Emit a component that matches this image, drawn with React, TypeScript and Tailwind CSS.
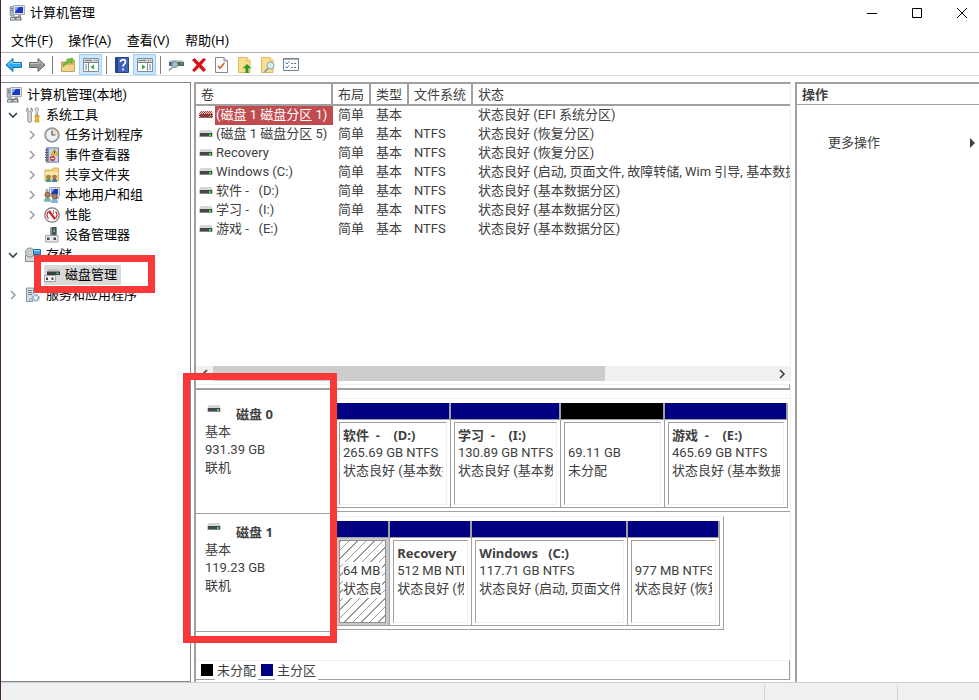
import clsx from "clsx";
import type { ReactNode } from "react";

type TreeItem = {
  label: string;
  level: 0 | 1 | 2;
  icon: ReactNode;
  state?: "open" | "closed";
  selected?: boolean;
};

type Volume = {
  name: string;
  fs: string;
  status: string;
};

type Partition = {
  name: string;
  size: string;
  status: string;
  weight: number;
  unallocated?: boolean;
  selected?: boolean;
};

function ComputerIcon() {
  return (
    <svg width="16" height="16" viewBox="0 0 16 16" aria-hidden="true">
      <path d="M1 1.500h4.500v9H1z" fill="#aeb6bd" stroke="#7b858d" strokeWidth=".6" />
      <path d="M2 3.500h2M2 5.500h2" stroke="#5b656d" strokeWidth=".8" />
      <path d="M4.500 .500h11v9h-11z" fill="#dfe4e8" stroke="#a3abb2" />
      <path d="M6 2h8v6H6z" fill="#1c38c4" />
      <path d="M6 7V2h4z" fill="#7ea3f4" />
      <path d="M9 10h3v2H9z" fill="#a5adb3" />
      <path d="M2 11.500h9.500l1 1.500v2.500H1V13z" fill="#6f797f" />
      <path d="M2 13h3.500v1.500H2zM7.500 13H11v1.500H7.500z" fill="#dde2e5" />
    </svg>
  );
}

function ToolsIcon() {
  return (
    <svg width="16" height="16" viewBox="0 0 16 16" aria-hidden="true">
      <path d="M3 .800v3l1.500 1 1.500-1v-3c1.800 1 2.200 3.600.400 5V14c0 2-3.500 2-3.500 0V5.800C.800 4.400 1.200 1.800 3 .800z" fill="#d5d8da" stroke="#777d81" strokeWidth=".8" />
      <path d="M10.500 1h2.500l.6 2-1 1.500V9h-1.500V4.500l-1-1.500z" fill="#eceef0" stroke="#777" strokeWidth=".7" />
      <path d="M10 8.500h4v2l-.6 1 .6 3.500h-4l.6-3.500-.6-1z" fill="#f2b51d" stroke="#bd8208" strokeWidth=".6" />
    </svg>
  );
}

function ClockIcon() {
  return (
    <svg width="16" height="16" viewBox="0 0 16 16" aria-hidden="true">
      <circle cx="8" cy="8" r="7.300" fill="#a9adb0" stroke="#73787c" strokeWidth=".7" />
      <circle cx="8" cy="8" r="5.700" fill="#eef3f8" />
      <path d="M8 8V2.500A5.500 5.500 0 0 1 13.500 8z" fill="#f5dfad" />
      <path d="M8 3.500V8h3.500" fill="none" stroke="#45608a" strokeWidth="1.200" />
    </svg>
  );
}

function EventIcon() {
  return (
    <svg width="16" height="16" viewBox="0 0 16 16" aria-hidden="true">
      <path d="M2.500 .800h12v14.400h-12z" fill="#c3d2ea" stroke="#6e83a8" />
      <path d="M3 1h2v14H3z" fill="#7f95bb" />
      <path d="M1 3h3M1 5.500h3M1 8h3M1 10.500h3M1 13h3" stroke="#555" />
      <path d="M10.500 2l3.500 6H7z" fill="#f9cb2d" stroke="#b8860b" strokeWidth=".6" />
      <path d="M10.500 4v2.500" stroke="#222" />
      <circle cx="8.500" cy="11.500" r="2.700" fill="#d84141" />
      <path d="M7 11.500h3" stroke="#fff" />
    </svg>
  );
}

function UsersFigure({ x, y, body }: { x: number; y: number; body: string }) {
  return (
    <g transform={`translate(${x} ${y})`}>
      <path d="M0 7c0-3 1.500-3.500 2.500-3.500S5 4 5 7z" fill={body} />
      <circle cx="2.500" cy="2" r="1.800" fill="#b98055" stroke="#604025" strokeWidth=".5" />
    </g>
  );
}

function SharedFolderIcon() {
  return (
    <svg width="16" height="16" viewBox="0 0 16 16" aria-hidden="true">
      <path d="M1 3h7l1-2h5.500v13H1z" fill="#f2d27a" stroke="#cfa645" strokeWidth=".8" />
      <path d="M1.500 5h12.500v3H1.500z" fill="#fae9b4" />
      <UsersFigure x={2} y={8} body="#3c9a87" />
      <UsersFigure x={8} y={8} body="#3a79b7" />
    </svg>
  );
}

function LocalUsersIcon() {
  return (
    <svg width="16" height="16" viewBox="0 0 16 16" aria-hidden="true">
      <path d="M5.500 .500h10v8.500h-10z" fill="#dfe3e8" stroke="#a3abb2" />
      <path d="M7 2h7v5.500H7z" fill="#1837c5" />
      <path d="M7 7V2h3.500z" fill="#7ea3f4" />
      <path d="M1.500 2h3v7h-3z" fill="#a7b0b7" />
      <path d="M10 10h5v2h-5z" fill="#9ba4ab" />
      <g transform="translate(0 5) scale(1.400)">
        <UsersFigure x={0} y={0} body="#77b8a0" />
        <UsersFigure x={5} y={1} body="#8ab4dc" />
      </g>
    </svg>
  );
}

function PerformanceIcon() {
  return (
    <svg width="16" height="16" viewBox="0 0 16 16" aria-hidden="true">
      <circle cx="8" cy="8" r="7.200" fill="#fff" stroke="#73797e" strokeWidth="1.200" />
      <path d="M4.500 11.500a5 5 0 0 1 0-7M11.500 4.500a5 5 0 0 1 0 7" fill="none" stroke="#d83b3b" strokeWidth="1.600" />
      <path d="M5 4l6 8" stroke="#c32424" strokeWidth="2.200" />
      <path d="M9.500 3v4" stroke="#5c6266" strokeWidth=".8" />
    </svg>
  );
}

function DeviceIcon() {
  return (
    <svg width="16" height="16" viewBox="0 0 16 16" aria-hidden="true">
      <path d="M6 .500l2-.5h4.500v9H6z" fill="#8b9297" />
      <path d="M8 0h4.500v9H8z" fill="#4b5257" />
      <path d="M9.500 2.500H11V5H9.500z" fill="#44e067" />
      <path d="M1.500 8.500h12.500v6.500H1.500z" fill="#e7e9ea" stroke="#a0a5a8" />
      <path d="M3 10.500h2.500V13H3zM9.500 10.500H12V13H9.500z" fill="#454b50" />
    </svg>
  );
}

function StorageIcon() {
  return (
    <svg width="16" height="16" viewBox="0 0 16 16" aria-hidden="true">
      <path d="M.500 8.500h12v6H.500z" fill="#d5d9dc" stroke="#858c91" />
      <circle cx="5" cy="5.500" r="4.500" fill="#cdd2d5" stroke="#868d92" />
      <circle cx="5" cy="5.500" r="1.500" fill="#fff" stroke="#868d92" strokeWidth=".7" />
      <path d="M8.500 2.500h7v5h-7z" fill="#3fa6df" stroke="#1e6f9f" />
      <path d="M9 3.500h6" stroke="#a5def9" />
      <path d="M9 9.500h2" stroke="#3b3" />
    </svg>
  );
}

function DiskManagementIcon() {
  return (
    <svg width="16" height="16" viewBox="0 0 16 16" aria-hidden="true">
      <path d="M5 2h9l2 2.500H3z" fill="#bfc3c5" />
      <path d="M3 4.500h13V8H3z" fill="#373d41" />
      <path d="M12.500 5.500h2V7h-2z" fill="#3df35f" />
      <path d="M.500 8.500h11v6H.500z" fill="#f4f4f4" stroke="#a0a4a6" />
      <path d="M2 10.500h2V13H2zM7.500 10.500h2V13h-2z" fill="#42474b" />
    </svg>
  );
}

function ServicesIcon() {
  return (
    <svg width="16" height="16" viewBox="0 0 16 16" aria-hidden="true">
      <path d="M1.500 1h7v13.500h-7z" fill="#d9dde0" stroke="#8a9298" />
      <path d="M3 3.500h4M3 5.500h4M3 7.500h4" stroke="#727b82" />
      <path d="M8 7h7v8H8z" fill="#f4f7fa" />
      <circle cx="10.800" cy="10.800" r="2.800" fill="none" stroke="#7fa3c2" strokeWidth="2" strokeDasharray="1.500 .7" />
      <circle cx="6" cy="13" r="1.500" fill="none" stroke="#8ba5ba" />
    </svg>
  );
}

function DriveIcon({ hatched = false }: { hatched?: boolean }) {
  return (
    <svg width="14" height="7" viewBox="0 0 14 7" className="shrink-0" aria-hidden="true">
      <defs>
        <pattern id="drive-hatch" width="2" height="2" patternUnits="userSpaceOnUse">
          <path d="M0 0h1v1H0zM1 1h1v1H1z" fill="#c03030" />
        </pattern>
      </defs>
      <path d="M2 0h10l2 3H0z" fill="#d4d6d9" />
      <path d="M0 3h14v4H0z" fill="#c9cccf" />
      <path d="M1 3h12v3.500H1z" fill="#45484b" />
      <path d="M10 4h2v2h-2z" fill="#2bea3c" />
      {hatched ? <path d="M1 0h12l1 3v4H0V3z" fill="url(#drive-hatch)" /> : null}
    </svg>
  );
}

function ArrowIcon({ forward = false }: { forward?: boolean }) {
  return (
    <svg width="18" height="16" viewBox="0 0 18 16" className={forward ? "-scale-x-100" : ""} aria-hidden="true">
      <path
        d="M1 8l7-6.500v4h8.500v5H8v4z"
        fill={forward ? "#929496" : "#2fa9ea"}
        stroke={forward ? "#66696b" : "#1571ad"}
        strokeLinejoin="round"
      />
      <path d="M3 7.500L7 4v2.500h8.500" fill="none" stroke={forward ? "#c4c6c7" : "#8edbfb"} />
    </svg>
  );
}

function FolderUpIcon() {
  return (
    <svg width="16" height="16" viewBox="0 0 16 16" aria-hidden="true">
      <path d="M1.500 5h5l1-2h7v11.500h-13z" fill="#dfb65c" stroke="#b9944a" strokeWidth=".8" />
      <path d="M2 8h12v6H2z" fill="#f1d48c" />
      <path d="M2.500 10C3 6.500 5 4.500 7.500 4.200V6L12 2.800 8 .300v1.500" fill="none" />
      <path d="M3 10c.5-4 2.500-5.500 5-5.800L6.500 2.500 12.500 1 12 6.500l-1.700-1.200C8.500 6 6 6.500 3 10z" fill="#6cc644" stroke="#4a9b2a" strokeWidth=".6" />
    </svg>
  );
}

function PaneIcon({ forward = false }: { forward?: boolean }) {
  return (
    <svg width="16" height="14" viewBox="0 0 16 14" aria-hidden="true">
      <path d="M.500 .500h15v13H.500z" fill="#fff" stroke="#858c92" />
      <path d="M1 1h14v3H1z" fill="#d5d9dc" />
      <path d="M2 2.500h7M11 2.500h1M13 2.500h1M1 4.500h14" stroke="#757d84" />
      {forward ? (
        <>
          <path d="M10.500 5v8.500" stroke="#858c92" />
          <path d="M12 7h2M12 9h2M12 11h2" stroke="#4c86b6" />
          <path d="M5 6.500v5L8.500 9z" fill="#35a937" />
        </>
      ) : (
        <>
          <path d="M5.500 5v8.500" stroke="#858c92" />
          <path d="M2 7h2M2 9h2M2 11h2" stroke="#4c86b6" />
          <path d="M11 6.500v5L7.500 9z" fill="#35a937" />
        </>
      )}
    </svg>
  );
}

function HelpIcon() {
  return (
    <svg width="14" height="16" viewBox="0 0 14 16" aria-hidden="true">
      <path d="M.500 .500h13v15H.500z" fill="#3f63bd" stroke="#2a438b" />
      <path d="M1 1h2v14H1z" fill="#2a438b" />
      <path d="M5.500 5c0-3.200 5-3 5 0 0 2-2.500 2.200-2.500 4.500M8 11.500v2" fill="none" stroke="#fff" strokeWidth="1.700" />
    </svg>
  );
}

function ScanDriveIcon() {
  return (
    <svg width="16" height="14" viewBox="0 0 16 14" aria-hidden="true">
      <path d="M2 2h12l2 2H1z" fill="#c3c8cc" />
      <path d="M1 4h15v4H1z" fill="#5a6167" />
      <path d="M13 5h1.500v1.500H13z" fill="#39e452" />
      <path d="M4.500 9L1 12.500" stroke="#8b9298" strokeWidth="1.600" />
      <circle cx="6.800" cy="6.500" r="3" fill="#9cc3da" stroke="#7a8992" />
    </svg>
  );
}

function DeleteIcon() {
  return (
    <svg width="14" height="14" viewBox="0 0 14 14" aria-hidden="true">
      <path d="M0 2l2.500-2 4.500 4.500L11.500 0 14 1.500 9.500 6.800l4.500 5-2.500 2.200L7 9.300 2.500 14 0 12.200 4.700 7z" fill="#d40f16" />
    </svg>
  );
}

function CheckPageIcon() {
  return (
    <svg width="13" height="16" viewBox="0 0 13 16" aria-hidden="true">
      <path d="M.500 .500h8.500l3.500 3.500v11.500H.500z" fill="#fbfbfb" stroke="#858789" />
      <path d="M9 .500V4h3.500" fill="#ddd" stroke="#858789" />
      <path d="M3 9l2 2 4.500-5" fill="none" stroke="#df5721" strokeWidth="1.600" />
    </svg>
  );
}

function NoteIcon({ search = false }: { search?: boolean }) {
  return (
    <svg width="15" height="16" viewBox="0 0 15 16" aria-hidden="true">
      <path d="M1.500 .500h8.500l3 3v12H1.500z" fill="#fbdf8c" stroke="#dfb95c" />
      <path d="M10 .500V4h3" fill="#fff0b8" stroke="#dfb95c" />
      {search ? (
        <>
          <circle cx="10.500" cy="8.500" r="3.500" fill="#d6edf8" stroke="#8ba4b2" />
          <path d="M8 11.500L4 15.500" stroke="#8ba4b2" strokeWidth="1.800" />
        </>
      ) : (
        <path d="M10 7l4.500 4.300H11.500V16h-3v-4.700H5.500z" fill="#279b2c" />
      )}
    </svg>
  );
}

function ChecklistIcon() {
  return (
    <svg width="16" height="13" viewBox="0 0 16 13" aria-hidden="true">
      <path d="M.500 .500h15v12H.500z" fill="#fff" stroke="#77818a" />
      <path d="M1 1.500h14" stroke="#aeb4b9" />
      <path d="M2.500 4.500L4 6l2-2.500M2.500 8.500L4 10l2-2.500" fill="none" stroke="#2c7fc1" />
      <path d="M8 5.500h2M11 5.500h2M8 9.500h2M11 9.500h2" stroke="#777" />
    </svg>
  );
}

function Chevron({ className }: { className?: string }) {
  return (
    <svg width="10" height="10" viewBox="0 0 10 10" className={className} aria-hidden="true">
      <path d="M3 1l4 4-4 4" fill="none" stroke="currentColor" strokeWidth="1.600" />
    </svg>
  );
}

const MENUS = ["文件(F)", "操作(A)", "查看(V)", "帮助(H)"];

const TOOLBAR: { label: string; icon: ReactNode; active?: boolean; divider?: boolean }[] = [
  { label: "后退", icon: <ArrowIcon /> },
  { label: "前进", icon: <ArrowIcon forward />, divider: true },
  { label: "上一级", icon: <FolderUpIcon /> },
  { label: "显示/隐藏控制台树", icon: <PaneIcon />, active: true, divider: true },
  { label: "帮助", icon: <HelpIcon /> },
  { label: "显示/隐藏操作窗格", icon: <PaneIcon forward />, active: true, divider: true },
  { label: "重新扫描磁盘", icon: <ScanDriveIcon /> },
  { label: "删除", icon: <DeleteIcon /> },
  { label: "属性", icon: <CheckPageIcon /> },
  { label: "打开", icon: <NoteIcon /> },
  { label: "浏览", icon: <NoteIcon search /> },
  { label: "设置", icon: <ChecklistIcon /> },
];

const TREE: TreeItem[] = [
  { label: "计算机管理(本地)", level: 0, icon: <ComputerIcon /> },
  { label: "系统工具", level: 1, icon: <ToolsIcon />, state: "open" },
  { label: "任务计划程序", level: 2, icon: <ClockIcon />, state: "closed" },
  { label: "事件查看器", level: 2, icon: <EventIcon />, state: "closed" },
  { label: "共享文件夹", level: 2, icon: <SharedFolderIcon />, state: "closed" },
  { label: "本地用户和组", level: 2, icon: <LocalUsersIcon />, state: "closed" },
  { label: "性能", level: 2, icon: <PerformanceIcon />, state: "closed" },
  { label: "设备管理器", level: 2, icon: <DeviceIcon /> },
  { label: "存储", level: 1, icon: <StorageIcon />, state: "open" },
  { label: "磁盘管理", level: 2, icon: <DiskManagementIcon />, selected: true },
  { label: "服务和应用程序", level: 1, icon: <ServicesIcon />, state: "closed" },
];

const COLUMNS = ["卷", "布局", "类型", "文件系统", "状态"];

const VOLUMES: Volume[] = [
  { name: "(磁盘 1 磁盘分区 1)", fs: "", status: "状态良好 (EFI 系统分区)" },
  { name: "(磁盘 1 磁盘分区 5)", fs: "NTFS", status: "状态良好 (恢复分区)" },
  { name: "Recovery", fs: "NTFS", status: "状态良好 (恢复分区)" },
  { name: "Windows (C:)", fs: "NTFS", status: "状态良好 (启动, 页面文件, 故障转储, Wim 引导, 基本数据分区)" },
  { name: "软件 -   (D:)", fs: "NTFS", status: "状态良好 (基本数据分区)" },
  { name: "学习 -   (I:)", fs: "NTFS", status: "状态良好 (基本数据分区)" },
  { name: "游戏 -   (E:)", fs: "NTFS", status: "状态良好 (基本数据分区)" },
];

const DISK_0: Partition[] = [
  { name: "软件  -    (D:)", size: "265.69 GB NTFS", status: "状态良好 (基本数据分区)", weight: 115 },
  { name: "学习  -    (I:)", size: "130.89 GB NTFS", status: "状态良好 (基本数据分区)", weight: 110 },
  { name: "", size: "69.11 GB", status: "未分配", weight: 104, unallocated: true },
  { name: "游戏  -    (E:)", size: "465.69 GB NTFS", status: "状态良好 (基本数据分区)", weight: 123 },
];

const DISK_1: Partition[] = [
  { name: "", size: "64 MB", status: "状态良好", weight: 54, selected: true },
  { name: "Recovery", size: "512 MB NTFS", status: "状态良好 (恢复分区)", weight: 82 },
  { name: "Windows   (C:)", size: "117.71 GB NTFS", status: "状态良好 (启动, 页面文件, 故障转储)", weight: 155 },
  { name: "", size: "977 MB NTFS", status: "状态良好 (恢复分区)", weight: 92 },
];

const BOLD = "font-['Noto_Sans','Noto_Sans_CJK_SC',sans-serif] font-bold";

function TitleBar() {
  return (
    <header className="flex h-[26px] items-center gap-[10px] pl-2">
      <div className="flex flex-1 items-center gap-[5px]">
        <ComputerIcon />
        <h1>计算机管理</h1>
      </div>
      <button type="button" aria-label="最小化" className="grid h-6 w-[35px] place-items-center">
        <svg width="10" height="10" viewBox="0 0 10 10"><path d="M0 5.500h10" stroke="#000" /></svg>
      </button>
      <button type="button" aria-label="最大化" className="grid h-6 w-[35px] place-items-center">
        <svg width="10" height="10" viewBox="0 0 10 10"><path d="M.500 .500h9v9h-9z" fill="none" stroke="#000" /></svg>
      </button>
      <button type="button" aria-label="关闭" className="grid h-6 w-[35px] place-items-center">
        <svg width="10" height="10" viewBox="0 0 10 10"><path d="M0 0l10 10M10 0L0 10" stroke="#000" /></svg>
      </button>
    </header>
  );
}

function Toolbar() {
  return (
    <div role="toolbar" className="flex h-6 items-end border-t border-b border-t-[#b0b0b0] border-b-[#dcdcdc] pl-px">
      {TOOLBAR.map((tool) => (
        <div key={tool.label} className="flex h-[21px] items-center">
          <button
            type="button"
            aria-label={tool.label}
            className={clsx("grid h-[21px] w-[23px] place-items-center", tool.active && "border border-[#99d1ff] bg-[#cce8ff]")}
          >
            {tool.icon}
          </button>
          {tool.divider ? <span className="mx-[3px] h-[18px] w-[2px] border-r border-[#808080]" /> : null}
        </div>
      ))}
    </div>
  );
}

function Tree() {
  return (
    <nav className="relative w-[190px] shrink-0 border border-l-0 border-[#828790] pt-[2px]">
      <ul>
        {TREE.map((item) => (
          <li
            key={item.label}
            className={clsx("flex h-5 items-center", item.level === 1 && "pl-[7px]", item.level === 2 && "pl-[26px]", item.level === 0 && "pl-[5px]")}
          >
            {item.level > 0 ? (
              <span className="grid w-[17px] shrink-0 place-items-start">
                {item.state ? (
                  <button type="button" aria-label={item.state === "open" ? `折叠${item.label}` : `展开${item.label}`}>
                    <Chevron className={item.state === "open" ? "rotate-90 text-[#404040]" : "text-[#a0a0a0]"} />
                  </button>
                ) : null}
              </span>
            ) : null}
            <a href="#" className={clsx("flex h-5 items-center gap-[5px] pr-1", item.selected && "bg-[#d9d9d9]")}>
              <span className="grid w-4 place-items-center">{item.icon}</span>
              {item.label}
            </a>
          </li>
        ))}
      </ul>
      <div className="pointer-events-none absolute top-[172px] left-[33px] h-[38px] w-[121px] border-[7px] border-[#fb3838]" />
    </nav>
  );
}

function VolumeTable() {
  return (
    <table className="w-full table-fixed border-separate border-spacing-0 text-left leading-[17px]">
      <colgroup>
        <col className="w-[137px]" />
        <col className="w-[38px]" />
        <col className="w-[38px]" />
        <col className="w-[64px]" />
        <col />
      </colgroup>
      <thead>
        <tr>
          {COLUMNS.map((column) => (
            <th
              key={column}
              className="h-[22px] border-r-2 border-b-2 border-[#a0a0a0] p-0 pl-[5px] font-normal whitespace-nowrap last:border-r-0"
            >
              {column}
            </th>
          ))}
        </tr>
      </thead>
      <tbody>
        {VOLUMES.map((volume, index) => (
          <tr key={volume.name} className="align-top">
            <td className="p-0">
              <div className="flex h-[19px] gap-[2px] pl-[3px]">
                <span className="pt-[5px]">
                  <DriveIcon hatched={index === 0} />
                </span>
                <span
                  className={clsx(
                    "flex-1 border border-transparent leading-[16px] whitespace-pre",
                    index === 0 && "border-dotted border-[#59b0b0] bg-[#c04c4f] text-white",
                  )}
                >
                  {volume.name}
                </span>
              </div>
            </td>
            <td className="p-0 pl-[5px]">简单</td>
            <td className="p-0 pl-[5px]">基本</td>
            <td className="p-0 pl-[5px]">{volume.fs}</td>
            <td className="overflow-hidden p-0 pl-[5px] whitespace-nowrap">{volume.status}</td>
          </tr>
        ))}
      </tbody>
    </table>
  );
}

function PartitionBlock({ partition }: { partition: Partition }) {
  return (
    <div className="flex min-w-0 basis-0 flex-col" style={{ flexGrow: partition.weight }}>
      <div className={clsx("h-4 border-r-2 border-[#a0a0a0]", partition.unallocated ? "bg-black" : "bg-[#000080]")} />
      <div
        className={clsx(
          "flex-1 border-t border-r border-b border-[#a0a0a0] px-[3px] py-[2px]",
          partition.selected && "bg-[#c8c8c8]",
        )}
      >
        <div
          className={clsx(
            "h-full overflow-hidden border px-[3px] pt-[3px] leading-[18px] whitespace-pre",
            partition.selected
              ? "border-[#909090] bg-white bg-[repeating-linear-gradient(135deg,#999_0px,#999_1px,transparent_1px,transparent_6px)]"
              : "border-t-[#a0a0a0] border-r-[#f0f0f0] border-b-[#f0f0f0] border-l-[#a0a0a0]",
          )}
        >
          <p className={clsx("h-[18px] overflow-hidden", BOLD)}>{partition.name}</p>
          <p className={clsx("overflow-hidden", partition.selected && "bg-white")}>{partition.size}</p>
          <p className={clsx("overflow-hidden", partition.selected && "bg-white")}>{partition.status}</p>
        </div>
      </div>
    </div>
  );
}

function DiskRow({ name, size, partitions, className }: { name: string; size: string; partitions: Partition[]; className: string }) {
  return (
    <section className="flex">
      <div className="w-[140px] shrink-0 border-b border-[#a0a0a0] pt-[7px] pb-9 pl-[9px] leading-[18px]">
        <h2 className={clsx("flex items-start gap-[15px] pl-[2px]", BOLD)}>
          <DriveIcon />
          {name}
        </h2>
        <p>基本</p>
        <p>{size}</p>
        <p>联机</p>
      </div>
      <div className={clsx("mb-[2px] flex min-w-0 flex-1 border-t border-b border-t-[#f0f0f0] border-b-[#a0a0a0] pt-1 pb-[3px]", className)}>
        {partitions.map((partition) => (
          <PartitionBlock key={partition.size} partition={partition} />
        ))}
      </div>
    </section>
  );
}

function DiskManager() {
  return (
    <main className="flex min-w-0 flex-1 flex-col border-t-2 border-r border-l-2 border-[#a0a0a0] border-r-[#f0f0f0] text-[#404040]">
      <div className="flex-1 overflow-hidden">
        <VolumeTable />
      </div>
      <div className="flex h-[15px] bg-[#f0f0f0]">
        <button type="button" aria-label="向左滚动" className="grid w-[17px] place-items-center">
          <Chevron className="rotate-180" />
        </button>
        <div className="flex-1">
          <div className="h-full w-[70%] bg-[#cdcdcd]" />
        </div>
        <button type="button" aria-label="向右滚动" className="grid w-[17px] place-items-center">
          <Chevron />
        </button>
      </div>
      <div className="mt-[3px] h-[6px] border-t border-r border-b-2 border-[#a0a0a0] border-t-[#f0f0f0]" />
      <div className="relative mt-2 flex flex-col gap-[2px]">
        <DiskRow name="磁盘 0" size="931.39 GB" partitions={DISK_0} className="pr-[2px]" />
        <DiskRow name="磁盘 1" size="119.23 GB" partitions={DISK_1} className="mr-[66px] border-r border-r-[#a0a0a0] pr-[3px]" />
        <div className="pointer-events-none absolute -top-[25px] -bottom-[11px] -left-[13px] w-[154px] border-[7px] border-[#fb3838]" />
      </div>
      <footer className="mt-7 mb-[2px] flex h-5 border-t border-r border-b border-[#a0a0a0] border-t-[#f0f0f0] pl-[5px] leading-5">
        <span className="mt-[3px] size-3 bg-black" />
        <span className="-mb-px ml-[2px] bg-white px-[2px]">未分配</span>
        <span className="mt-[3px] ml-[3px] size-3 bg-[#000080]" />
        <span className="-mb-px ml-[2px] bg-white px-[2px]">主分区</span>
      </footer>
    </main>
  );
}

function ActionsPanel() {
  return (
    <aside className="ml-1 w-[184px] shrink-0 border-t-2 border-l-2 border-[#a0a0a0] text-[#404040]">
      <h2 className={clsx("h-[21px] border-b border-[#a0a0a0] pl-[5px] leading-[21px]", BOLD)}>操作</h2>
      <button type="button" className="mt-7 flex h-5 w-full items-center justify-between pr-1 pl-[31px]">
        更多操作
        <svg width="5" height="10" viewBox="0 0 5 10" aria-hidden="true">
          <path d="M0 0l5 5-5 5z" fill="currentColor" />
        </svg>
      </button>
    </aside>
  );
}

export default function App() {
  return (
    <div className="flex min-h-screen flex-col border-l border-[#4a2545] bg-white font-[Roboto,'Noto_Sans_CJK_SC',sans-serif] text-[13px] leading-[18px] text-black">
      <TitleBar />
      <div role="menubar" className="flex h-[26px] items-center gap-[15px] pt-1 pl-[10px]">
        {MENUS.map((menu) => (
          <button key={menu} type="button" role="menuitem">
            {menu}
          </button>
        ))}
      </div>
      <Toolbar />
      <div className="mt-[6px] flex flex-1">
        <Tree />
        <div className="ml-[3px] flex min-w-0 flex-1">
          <DiskManager />
          <ActionsPanel />
        </div>
      </div>
      <div className="flex h-[18px] border-t border-[#d0d0d0] bg-[#f0f0f0]">
        <div className="flex-1" />
        <div className="mt-[2px] w-[133px] border-l border-[#d0d0d0]" />
        <div className="mt-[2px] w-[82px] border-l border-[#d0d0d0]" />
      </div>
    </div>
  );
}
